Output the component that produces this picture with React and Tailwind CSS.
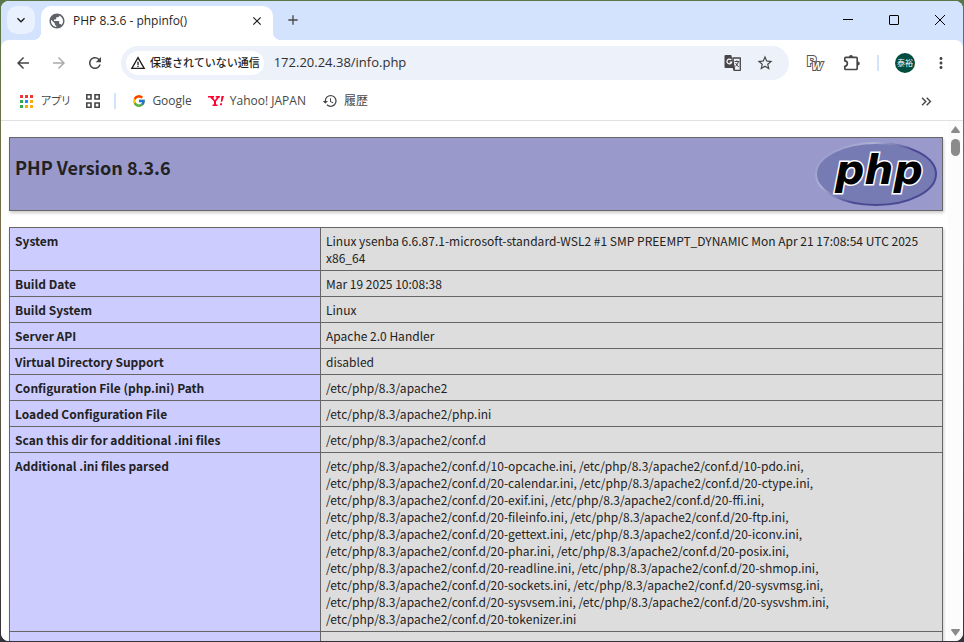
import { useState } from "react";
import { FcGoogle } from "react-icons/fc";
import {
  MdAdd,
  MdArrowBack,
  MdArrowForward,
  MdClose,
  MdHistory,
  MdKeyboardArrowDown,
  MdKeyboardDoubleArrowRight,
  MdMoreVert,
  MdPublic,
  MdRefresh,
  MdStarBorder,
  MdWarningAmber,
} from "react-icons/md";

const iniFiles = [
  "10-opcache", "10-pdo", "20-calendar", "20-ctype", "20-exif", "20-ffi",
  "20-fileinfo", "20-ftp", "20-gettext", "20-iconv", "20-phar", "20-posix",
  "20-readline", "20-shmop", "20-sockets", "20-sysvmsg", "20-sysvsem",
  "20-sysvshm", "20-tokenizer",
];

const parsed = iniFiles
  .map((name) => `/etc/php/8.3/apache2/conf.d/${name}.ini`)
  .join(", ");

const info = [
  ["System", "Linux ysenba 6.6.87.1-microsoft-standard-WSL2 #1 SMP PREEMPT_DYNAMIC Mon Apr 21 17:08:54 UTC 2025 x86_64"],
  ["Build Date", "Mar 19 2025 10:08:38"],
  ["Build System", "Linux"],
  ["Server API", "Apache 2.0 Handler"],
  ["Virtual Directory Support", "disabled"],
  ["Configuration File (php.ini) Path", "/etc/php/8.3/apache2"],
  ["Loaded Configuration File", "/etc/php/8.3/apache2/php.ini"],
  ["Scan this dir for additional .ini files", "/etc/php/8.3/apache2/conf.d"],
  ["Additional .ini files parsed", parsed],
  ["", ""],
];

const AppsIcon = () => (
  <svg width="13" height="13" viewBox="0 0 13 13" shapeRendering="crispEdges">
    <path fill="#ea3a35" d="M0 0h3v3H0zM5 0h3v3H5zM10 0h3v3h-3z" />
    <path fill="#34a853" d="M0 5h3v3H0zM0 10h3v3H0z" />
    <path fill="#1a8cff" d="M5 5h3v3H5z" />
    <path fill="#fbab05" d="M10 5h3v3h-3zM5 10h3v3H5zM10 10h3v3h-3z" />
  </svg>
);

const GroupsIcon = () => (
  <svg width="14" height="14" viewBox="0 0 14 14" fill="none" stroke="#474747" strokeWidth="1.6">
    <path d="M.8.800h4.200v4.200H.8zM9 .8h4.200v4.200H9zM.8 9h4.200v4.200H.8zM9 9h4.200v4.200H9z" />
  </svg>
);

const TranslateIcon = () => (
  <svg width="18" height="18" viewBox="0 0 18 18" fill="none">
    <path d="M9 4h7.300v12.300h-6.300z" stroke="#474747" strokeWidth="1.300" strokeLinejoin="round" />
    <path d="M1.500 1h5.700l3.800 13H1.500Q.5 14 .5 13V2q0-1 1-1z" fill="#474747" />
    <path d="M7.300 6A2.400 2.400 0 1 0 7.700 8H5.600" stroke="#fff" strokeWidth="1.200" />
    <path d="M10.500 7.500h4.800M12.800 6.500v1M14.500 7.500q-.7 3.200-3.300 5M11.600 9q1 2.300 3.300 4" stroke="#474747" strokeWidth="1" />
    <path d="M8.500 14l1.800 2.500.9-2.500z" fill="#474747" />
  </svg>
);

const PuzzleIcon = () => (
  <svg width="18" height="18" viewBox="0 0 18 18" fill="none">
    <path
      d="M2.800 3.300h10.400q1 0 1 1v10.200q0 1-1 1H2.800q-1 0-1-1v-2.200c3.400-.4 3.400-5 0-5.400V4.300q0-1 1-1z"
      stroke="#474747"
      strokeWidth="1.7"
      strokeLinejoin="round"
    />
    <path d="M6 3a2 2 0 0 1 4 0zM14.800 7.400a2 2 0 0 1 0 4z" fill="#474747" />
  </svg>
);

const PwIcon = () => (
  <svg
    width="18"
    height="18"
    viewBox="0 0 18 18"
    className="overflow-visible"
    fontFamily="Liberation Sans"
    fontWeight="700"
    fill="#fff"
    stroke="#5a5552"
    strokeWidth="2"
    paintOrder="stroke"
  >
    <text x="1" y="12" fontSize="14">
      P
      <tspan x="6" y="16" fontSize="11" fontStyle="italic">W</tspan>
    </text>
  </svg>
);

const PhpLogo = () => (
  <svg width="122" height="66" viewBox="0 0 122 66" role="img" aria-label="PHP logo">
    <defs>
      <linearGradient id="rim" x1="0" y1="0" x2="1" y2="0.6">
        <stop offset="0" stopColor="#8f92c4" />
        <stop offset="0.35" stopColor="#aeb2d5" />
        <stop offset="0.65" stopColor="#484893" />
        <stop offset="1" stopColor="#484893" />
      </linearGradient>
    </defs>
    <ellipse cx="61" cy="33" rx="60" ry="31" fill="#777bb3" stroke="url(#rim)" strokeWidth="2" />
    <text
      x="20"
      y="43"
      fontFamily="DejaVu Sans"
      fontSize="41"
      fontWeight="700"
      fontStyle="italic"
      stroke="#fff"
      strokeWidth="3"
      paintOrder="stroke"
    >
      php
    </text>
  </svg>
);

function TabStrip() {
  return (
    <div className="flex h-[39px] shrink-0 bg-[#d3e2fd] pt-[5px] pl-1.5">
      <button aria-label="Search tabs" className="flex h-7 w-7 items-center justify-center rounded-[10px] bg-[#e9f0fe] text-[#1f1f1f]">
        <MdKeyboardArrowDown size={16} />
      </button>
      <div className="relative ml-1.5 flex h-[34px] w-[232px] items-center rounded-t-[10px] bg-white pr-2 pb-1 pl-[7px]">
        <div className="absolute bottom-0 -left-2 h-2 w-2 bg-[radial-gradient(circle_at_0_0,#d3e2fd_8px,white_8px)]" />
        <div className="absolute -right-2 bottom-0 h-2 w-2 bg-[radial-gradient(circle_at_100%_0,#d3e2fd_8px,white_8px)]" />
        <MdPublic size={18} className="text-[#5f6368]" />
        <span className="ml-[7px] flex-1 text-xs text-[#1f1f1f]">PHP 8.3.6 - phpinfo()</span>
        <button aria-label="Close tab" className="flex h-4 w-4 items-center justify-center text-[#1f1f1f]">
          <MdClose size={14} />
        </button>
      </div>
      <button aria-label="New tab" className="ml-3 flex h-7 w-4 items-center justify-center text-[#474747]">
        <MdAdd size={16} />
      </button>
      <div className="ml-auto flex h-7 items-center text-black">
        <button aria-label="Minimize" className="flex w-[46px] justify-center">
          <svg width="11" height="11"><path d="M0 4.5h10" stroke="currentColor" /></svg>
        </button>
        <button aria-label="Maximize" className="flex w-[46px] justify-center">
          <svg width="11" height="11"><rect x=".5" y=".5" width="9" height="9" rx=".5" fill="none" stroke="currentColor" /></svg>
        </button>
        <button aria-label="Close" className="flex w-[46px] justify-center">
          <svg width="11" height="11"><path d="M0 0l10 10M10 0L0 10" stroke="currentColor" /></svg>
        </button>
      </div>
    </div>
  );
}

function Toolbar() {
  const [url, setUrl] = useState("172.20.24.38/info.php");

  return (
    <div className="shrink-0 bg-[#d3e2fd]">
      <div className="flex h-[46px] items-center rounded-t-lg bg-white px-[13px] text-[#474747]">
        <button aria-label="Back"><MdArrowBack size={18} /></button>
        <button aria-label="Forward" className="ml-[18px] text-[#ababab]"><MdArrowForward size={18} /></button>
        <button aria-label="Reload" className="ml-[18px]"><MdRefresh size={18} /></button>
        <div className="ml-[17px] flex h-[34px] flex-1 items-center rounded-full bg-[#ecf1fa] px-[5px]">
          <button className="flex h-6 items-center rounded-full bg-white px-1 text-[11px] font-medium text-[#1f1f1f]">
            <MdWarningAmber size={16} className="mr-1" />
            保護されていない通信
          </button>
          <input
            aria-label="Address"
            value={url}
            onChange={(e) => setUrl(e.target.value)}
            className="ml-2.5 min-w-0 flex-1 bg-transparent text-[13px] text-[#303030] outline-none"
          />
          <button aria-label="Translate"><TranslateIcon /></button>
          <button aria-label="Bookmark" className="mr-2.5 ml-3.5"><MdStarBorder size={18} /></button>
        </div>
        <button aria-label="PW" className="ml-[17px]"><PwIcon /></button>
        <button aria-label="Extensions" className="ml-[19px]"><PuzzleIcon /></button>
        <div className="ml-4 h-4 w-0.5 bg-[#d3e2fd]" />
        <button className="ml-4 h-5 w-5 rounded-full bg-[#004d40] text-[8px] text-white">泰裕</button>
        <button aria-label="Menu" className="ml-[17px]"><MdMoreVert size={18} /></button>
      </div>
    </div>
  );
}

function BookmarkBar() {
  return (
    <nav className="flex h-[35px] shrink-0 items-center border-b border-[#dfe1e5] bg-white pb-1 pl-[19px] text-xs text-[#474747]">
      <a href="#apps" className="flex items-center gap-2 text-[11px] [font-feature-settings:'palt']">
        <AppsIcon />
        アプリ
      </a>
      <a href="#groups" aria-label="Tab groups" className="ml-4"><GroupsIcon /></a>
      <div className="ml-3.5 h-4 w-0.5 bg-[#d3e2fd]" />
      <a href="#google" className="ml-4 flex items-center gap-1.5">
        <FcGoogle size={14} />
        Google
      </a>
      <a href="#yahoo" className="ml-4 flex items-center gap-1.5">
        <svg width="16" height="12" viewBox="0 0 16 12" fill="#ff0033">
          <path d="M0 1h6v1.4H5L6.800 5.300 9 2.400H7.700V1h4.200v1.400h-.8L8 6.600v2.800h1.500V11h-5V9.400H6V6.600L2.200 2.400H0zM13.500 1H16l-1.800 5.800h-1.400zM12.300 8.300h1.900l-.5 2h-1.900z" />
        </svg>
        Yahoo! JAPAN
      </a>
      <a href="#history" className="ml-4 flex items-center gap-1.5">
        <MdHistory size={16} />
        履歴
      </a>
      <button aria-label="More bookmarks" className="mr-7 ml-auto"><MdKeyboardDoubleArrowRight size={17} /></button>
    </nav>
  );
}

function PhpInfo() {
  return (
    <main className="min-w-0 flex-1 overflow-hidden bg-white pt-4 pr-[5px] pl-2 font-['Noto_Sans_CJK_JP',sans-serif] text-[#222222]">
      <header className="flex h-[74px] items-start justify-between border border-[#666666] bg-[#9999cc] px-[5px] pt-[3px] shadow-[1px_2px_3px_#cccccc]">
        <h1 className="pt-[13px] text-lg leading-[26px] font-bold">PHP Version 8.3.6</h1>
        <PhpLogo />
      </header>
      <table className="mt-4 w-full table-fixed border-collapse text-left text-xs leading-[17px] shadow-[1px_2px_3px_#cccccc]">
        <tbody>
          {info.map(([name, value], index) => (
            <tr key={index} className="h-[26px]">
              <th scope="row" className="w-[311px] border border-[#666666] bg-[#ccccff] px-[5px] py-1 align-top font-bold">
                {name}
              </th>
              <td className="border border-[#666666] bg-[#dddddd] px-[5px] py-1 align-top">{value}</td>
            </tr>
          ))}
        </tbody>
      </table>
    </main>
  );
}

function Scrollbar() {
  return (
    <div className="flex w-[15px] shrink-0 flex-col items-center bg-[#fcfcfc] py-[5px]">
      <svg width="9" height="7" fill="#8b8b8b"><path d="M4.500 0L9 6q0 1-1 1H1Q0 7 0 6z" /></svg>
      <div className="mt-1.5 h-[17px] w-[9px] rounded-full bg-[#8b8b8b]" />
      <svg width="9" height="7" className="mt-auto" fill="#8b8b8b"><path d="M4.500 7L9 1q0-1-1-1H1Q0 0 0 1z" /></svg>
    </div>
  );
}

export default function App() {
  return (
    <div className="h-screen bg-[linear-gradient(#5a7748,#7d6a4a_40%,#33313a)] p-px font-['Open_Sans','Noto_Sans_CJK_JP',sans-serif]">
      <div className="flex h-full flex-col overflow-hidden rounded-lg bg-white">
        <TabStrip />
        <Toolbar />
        <BookmarkBar />
        <div className="flex min-h-0 flex-1">
          <PhpInfo />
          <Scrollbar />
        </div>
      </div>
    </div>
  );
}
